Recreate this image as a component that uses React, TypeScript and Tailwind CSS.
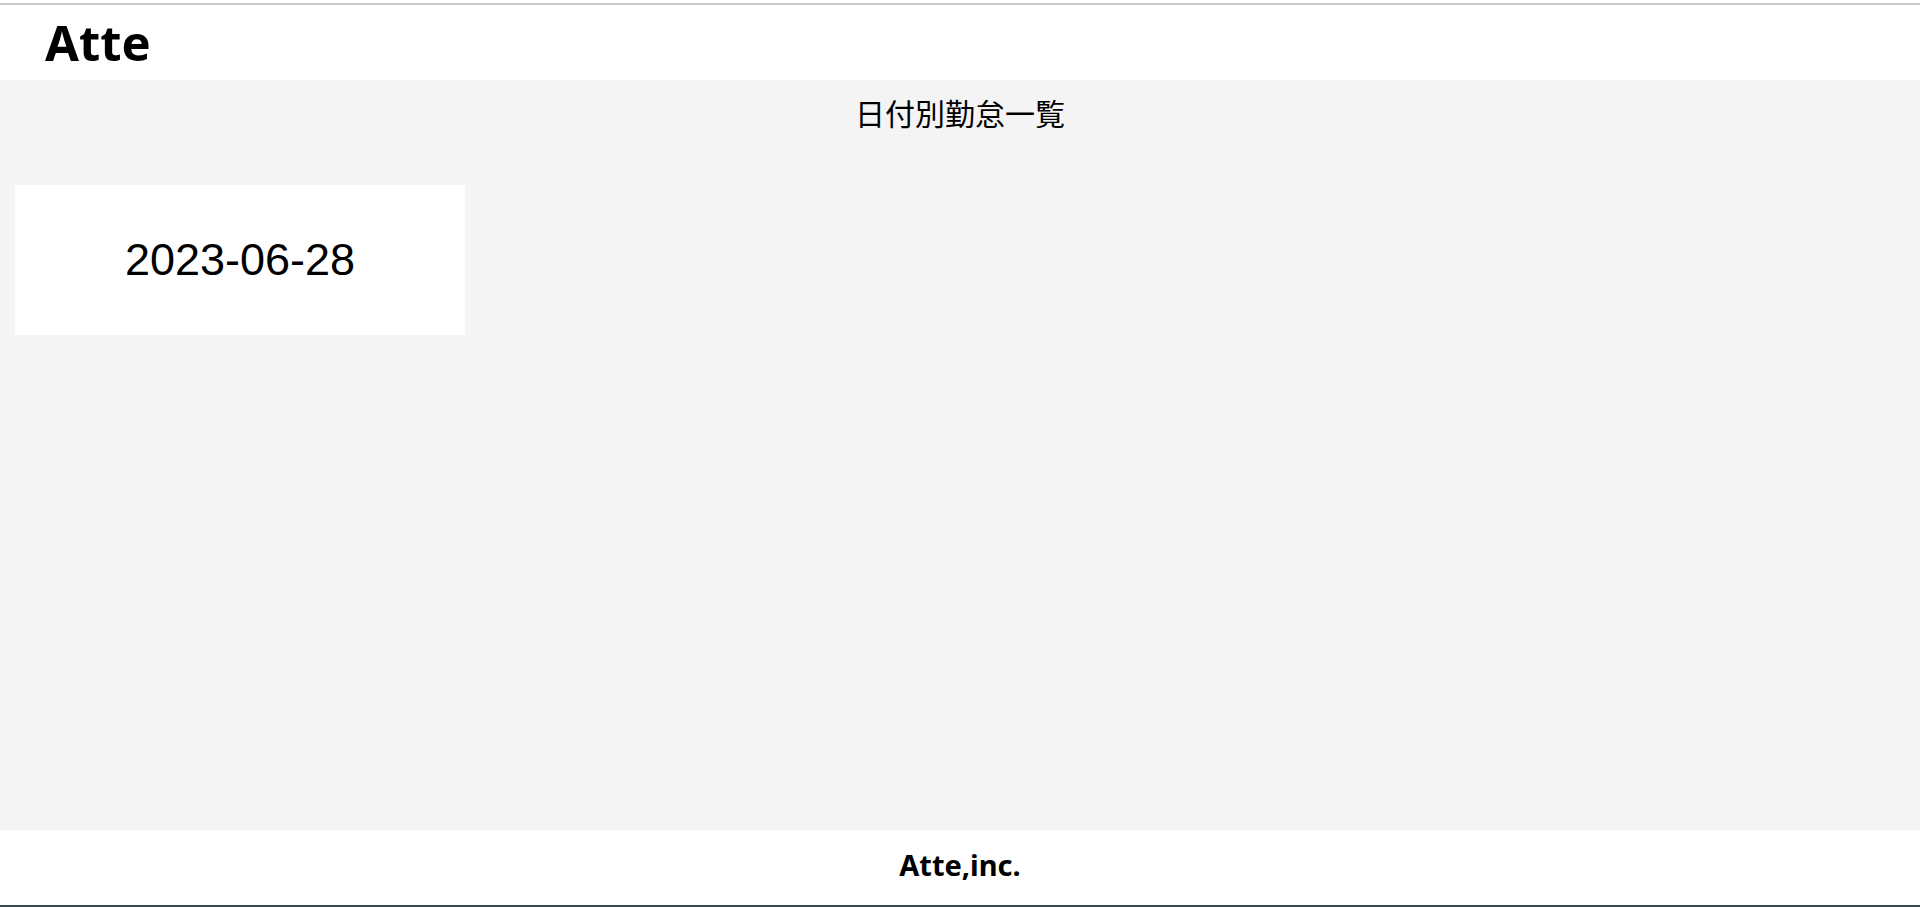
export default function App() {
  return (
    <div className="flex h-[907px] flex-col bg-white">
      <div className="h-[3px] bg-white" />
      <div className="h-[2px] bg-[#c8c8c8]" />
      <header className="flex h-[75px] items-center bg-white pl-[45px]">
        <h1 className="text-[49px] font-bold leading-none text-black [font-family:'Noto_Sans',sans-serif]">Atte</h1>
      </header>
      <main className="flex flex-1 flex-col bg-[#f4f4f4]">
        <h2 className="mt-[17px] text-center text-[30px] leading-[30px] text-black [font-family:'Noto_Sans_CJK_JP',sans-serif]">日付別勤怠一覧</h2>
        <div className="mt-[58px] ml-[15px] flex h-[150px] w-[450px] items-center justify-center bg-white">
          <span className="text-[45px] text-black [font-family:'Liberation_Sans',sans-serif]">2023-06-28</span>
        </div>
      </main>
      <footer className="flex h-[75px] items-center justify-center bg-white pb-[6px]">
        <span className="text-[29px] font-bold text-black [font-family:'Noto_Sans',sans-serif]">Atte,inc.</span>
      </footer>
      <div className="h-[2px] bg-[#37474f]" />
    </div>
  );
}
